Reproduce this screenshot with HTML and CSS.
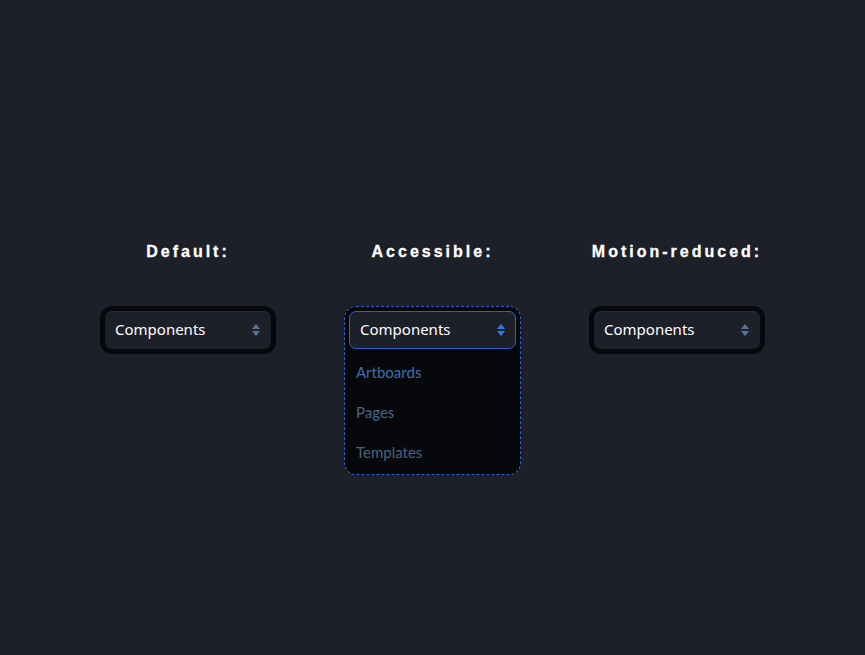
FILE: index.html
```html
<!DOCTYPE html>
<html lang="en">
<head>
    <meta charset="UTF-8">
    <meta name="viewport" content="width=device-width, initial-scale=1.0">
    <title>Select states</title>
    <link rel="stylesheet" href="styles.css">
</head>
<body>
    <div class="demos">
        <div class="demo">
            <h2>Default:</h2>
            <div class="select">
                <div class="select-button">
                    <span>Components</span>
                    <svg class="arrows" width="8" height="12" viewBox="0 0 8 12"><path d="M4 0 L8 5 H0 Z M0 7 H8 L4 12 Z"/></svg>
                </div>
            </div>
        </div>

        <div class="demo demo-open">
            <h2>Accessible:</h2>
            <div class="select select-open">
                <div class="select-button">
                    <span>Components</span>
                    <svg class="arrows" width="8" height="12" viewBox="0 0 8 12"><path d="M4 0 L8 5 H0 Z M0 7 H8 L4 12 Z"/></svg>
                </div>
                <ul class="options">
                    <li class="active">Artboards</li>
                    <li>Pages</li>
                    <li>Templates</li>
                </ul>
            </div>
        </div>

        <div class="demo">
            <h2>Motion-reduced:</h2>
            <div class="select">
                <div class="select-button">
                    <span>Components</span>
                    <svg class="arrows" width="8" height="12" viewBox="0 0 8 12"><path d="M4 0 L8 5 H0 Z M0 7 H8 L4 12 Z"/></svg>
                </div>
            </div>
        </div>
    </div>
</body>
</html>
```

FILE: styles.css
```css
body {
    margin: 0;
    background: #1e2029;
    color: #fff;
    font-family: "Noto Sans", "Open Sans", sans-serif;
}
.demos {
    display: flex;
    justify-content: center;
    gap: 68px;
    padding-top: 242px;
}
.demo {
    width: 176px;
    display: flex;
    flex-direction: column;
    align-items: stretch;
}
.demo-open {
    width: 177px;
}
h2 {
    margin: 0 0 44px;
    font-family: "Liberation Sans", Arial, sans-serif;
    font-size: 16px;
    line-height: 20px;
    font-weight: bold;
    letter-spacing: 3px;
    text-align: center;
    color: #fff;
    -webkit-text-stroke: 0.3px #fff;
}
.select {
    background: #07080b;
    border: 5px solid #07080b;
    border-radius: 12px;
}
.select-button {
    height: 38px;
    box-sizing: border-box;
    display: flex;
    align-items: center;
    justify-content: space-between;
    padding: 0 11px 4px 10px;
    background: #1e2029;
    border-top: 1px solid #2a2d38;
    border-radius: 7px;
    font-size: 15px;
}
.arrows {
    fill: #5a7499;
    margin-top: 2px;
}
.select-open {
    border: 1px dashed #2e63d4;
    padding: 4px 4px 2px;
}
.select-open .select-button {
    border: 1px solid #2f5fc8;
    padding: 0 10px 2px 10px;
}
.select-open .arrows {
    fill: #3778e6;
    margin-top: 1px;
}
.options {
    list-style: none;
    margin: 3px 0 0;
    padding: 0;
}
.options li {
    height: 40px;
    line-height: 40px;
    padding-left: 7px;
    font-family: Lato, "Noto Sans", sans-serif;
    font-size: 15px;
    color: #4b6382;
}
.options li.active {
    color: #3f70ae;
}
```
